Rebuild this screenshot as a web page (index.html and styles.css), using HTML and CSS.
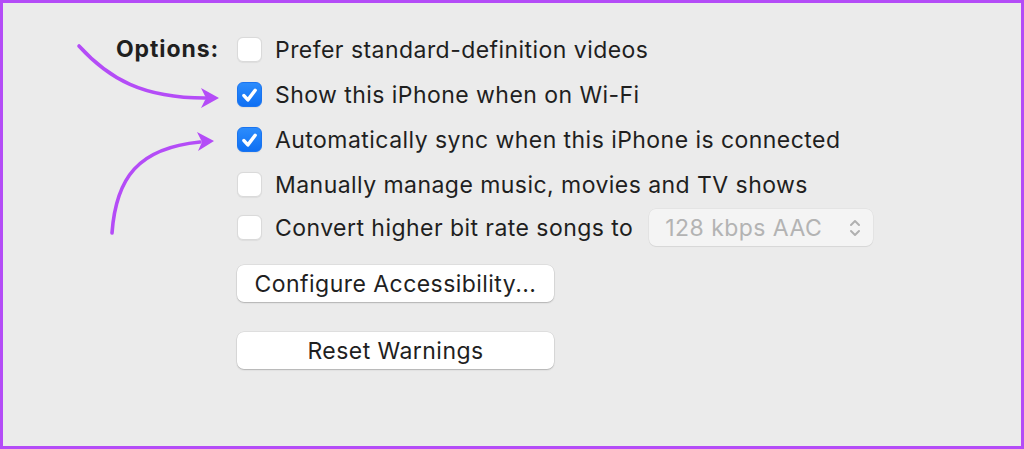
FILE: index.html
```html
<!DOCTYPE html>
<html lang="en">

<head>
    <meta charset="UTF-8">
    <meta name="viewport" content="width=device-width, initial-scale=1.0">
    <title>Options</title>
    <link rel="stylesheet" href="styles.css">
</head>

<body>
    <section id='frame'>
        <div class='options'>
            <div class='label'>Options:</div>
            <ul class='list'>
                <li class='row'><span class='box'></span>Prefer standard-definition videos</li>
                <li class='row'><span class='box checked'><svg viewBox="0 0 24 24"><path d="M6.2 12.6l4.1 4.5 7.6-10"/></svg></span>Show this iPhone when on Wi-Fi</li>
                <li class='row'><span class='box checked'><svg viewBox="0 0 24 24"><path d="M6.2 12.6l4.1 4.5 7.6-10"/></svg></span>Automatically sync when this iPhone is connected</li>
                <li class='row'><span class='box'></span>Manually manage music, movies and TV shows</li>
                <li class='row row-select'><span class='box'></span>Convert higher bit rate songs to
                    <div class='select'>
                        <span>128 kbps AAC</span>
                        <svg viewBox="0 0 12 20"><path d="M2 7l4-4 4 4M2 13l4 4 4-4"/></svg>
                    </div>
                </li>
                <li class='btn-row'><button class='btn'>Configure Accessibility...</button></li>
                <li class='btn-row second'><button class='btn'>Reset Warnings</button></li>
            </ul>
        </div>

        <svg class='arrows' viewBox="0 0 1018 443" width="1018" height="443">
            <path class='line' d="M76 43 C 106 76, 140 95, 202 95"/>
            <polygon class='head' points="216,95 198,85 203,95 198,105"/>
            <path class='line' d="M109 230 C 113 175, 135 145, 197 139"/>
            <polygon class='head' points="211,138 194,129 199,139 195,148"/>
        </svg>
    </section>
</body>

</html>
```

FILE: styles.css
```css
* {
    margin: 0;
    padding: 0;
    box-sizing: border-box;
}

html,
body {
    height: 100%;
    overflow: hidden;
}

body {
    font-family: Inter, "Noto Sans", sans-serif;
    color: #1f1f1f;
    background: #ececec;
}

#frame {
    position: relative;
    height: 100%;
    border: 3px solid #b44cf7;
    background: #ebebeb;
    padding: 24px 0 0 113px;
}

.options {
    display: flex;
    gap: 19px;
}

.label {
    width: 102px;
    height: 45px;
    line-height: 45px;
    text-align: right;
    font-size: 23px;
    font-weight: 700;
    letter-spacing: 0.9px;
    white-space: nowrap;
}

.list {
    list-style: none;
}

.row {
    display: flex;
    align-items: center;
    height: 45px;
    font-size: 23px;
    letter-spacing: 0.45px;
    white-space: nowrap;
}

.box {
    width: 25px;
    height: 25px;
    margin-right: 13px;
    border-radius: 6px;
    background: #fff;
    border: 1px solid #dadada;
    box-shadow: 0 0.5px 1px rgba(0, 0, 0, 0.06);
    display: flex;
    align-items: center;
    justify-content: center;
    flex-shrink: 0;
}

.box.checked {
    background: linear-gradient(#2c8cfc, #0e6ff3);
    border-color: #1a74f0;
}

.box svg {
    width: 24px;
    height: 24px;
    fill: none;
    stroke: #fff;
    stroke-width: 3.6;
    stroke-linecap: round;
    stroke-linejoin: round;
}

.row-select {
    height: 37px;
    margin-top: 2px;
}

.select {
    margin-left: 16px;
    width: 224px;
    height: 37px;
    border-radius: 7px;
    background: #f4f4f4;
    box-shadow: 0 0 0 0.5px rgba(0, 0, 0, 0.06), 0 1px 1px rgba(0, 0, 0, 0.06);
    display: flex;
    align-items: center;
    justify-content: space-between;
    padding: 0 12px 0 16px;
    color: #b3b3b3;
}

.select svg {
    width: 12px;
    height: 20px;
    fill: none;
    stroke: #b0b0b0;
    stroke-width: 2;
    stroke-linecap: round;
    stroke-linejoin: round;
}

.btn-row {
    margin-top: 19px;
}

.btn-row.second {
    margin-top: 30px;
}

.btn {
    width: 317px;
    height: 37px;
    border: none;
    border-radius: 7px;
    background: #fff;
    box-shadow: 0 0 0 0.5px rgba(0, 0, 0, 0.1), 0 1px 1.5px rgba(0, 0, 0, 0.2);
    font-family: Inter, "Noto Sans", sans-serif;
    font-size: 23px;
    letter-spacing: 0.45px;
    color: #1f1f1f;
}

.arrows {
    position: absolute;
    left: 0;
    top: 0;
    pointer-events: none;
}

.arrows .line {
    fill: none;
    stroke: #b44cf7;
    stroke-width: 3.6;
    stroke-linecap: round;
}

.arrows .head {
    fill: #b44cf7;
}
```
